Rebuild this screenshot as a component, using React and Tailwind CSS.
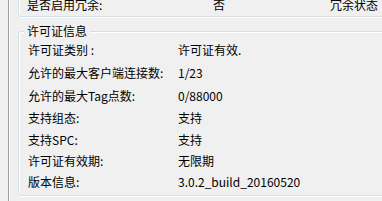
import React from 'react';

const rows = [
  { label: '许可证类别 :', value: '许可证有效.', h: 'h-[23px]' },
  { label: '允许的最大客户端连接数:', value: '1/23', h: 'h-[23px]' },
  { label: '允许的最大Tag点数:', value: '0/88000', h: 'h-[23px]' },
  { label: '支持组态:', value: '支持', h: 'h-[22px]' },
  { label: '支持SPC:', value: '支持', h: 'h-[21px]' },
  { label: '许可证有效期:', value: '无限期', h: 'h-[21px]' },
  { label: '版本信息:', value: '3.0.2_build_20160520', h: 'h-[21px]' },
];

const App = () => {
  return (
    <div className="w-[382px] h-[201px] overflow-hidden bg-[#f0f0f0] flex text-[12px] text-black font-['Noto_Sans_CJK_SC',sans-serif]">
      {/* left splitter edge */}
      <div className="w-[8px] shrink-0" />
      <div className="w-[1px] shrink-0 bg-[#a0a0a0]" />
      <div className="w-[1px] shrink-0 bg-white" />

      <div className="ml-[8px] w-[420px] shrink-0 flex flex-col">
        {/* redundancy group (cut off above) */}
        <div className="mt-[-20px] h-[37px] border border-[#d5dfe5] rounded-[3px] shadow-[inset_1px_1px_0_#fff,1px_1px_0_#fff] flex flex-col justify-end pb-[5px] pl-[8px]">
          <div className="h-[12px] flex items-center leading-[12px]">
            <span className="w-[186px] shrink-0">是否启用冗余:</span>
            <span className="w-[117px] shrink-0">否</span>
            <span>冗余状态</span>
          </div>
        </div>

        {/* license group */}
        <div className="relative mt-[14px] h-[165px] border border-[#d5dfe5] rounded-[3px] shadow-[inset_1px_1px_0_#fff,1px_1px_0_#fff] pl-[9px] pt-[6px]">
          <span className="absolute left-[5px] -top-[7px] h-[12px] leading-[12px] px-[3px] bg-[#f0f0f0]">
            许可证信息
          </span>
          {rows.map((r) => (
            <div key={r.label} className={`${r.h} flex items-center leading-[12px]`}>
              <span className="w-[150px] shrink-0">{r.label}</span>
              <span>{r.value}</span>
            </div>
          ))}
        </div>
      </div>
    </div>
  );
};

export default App;
